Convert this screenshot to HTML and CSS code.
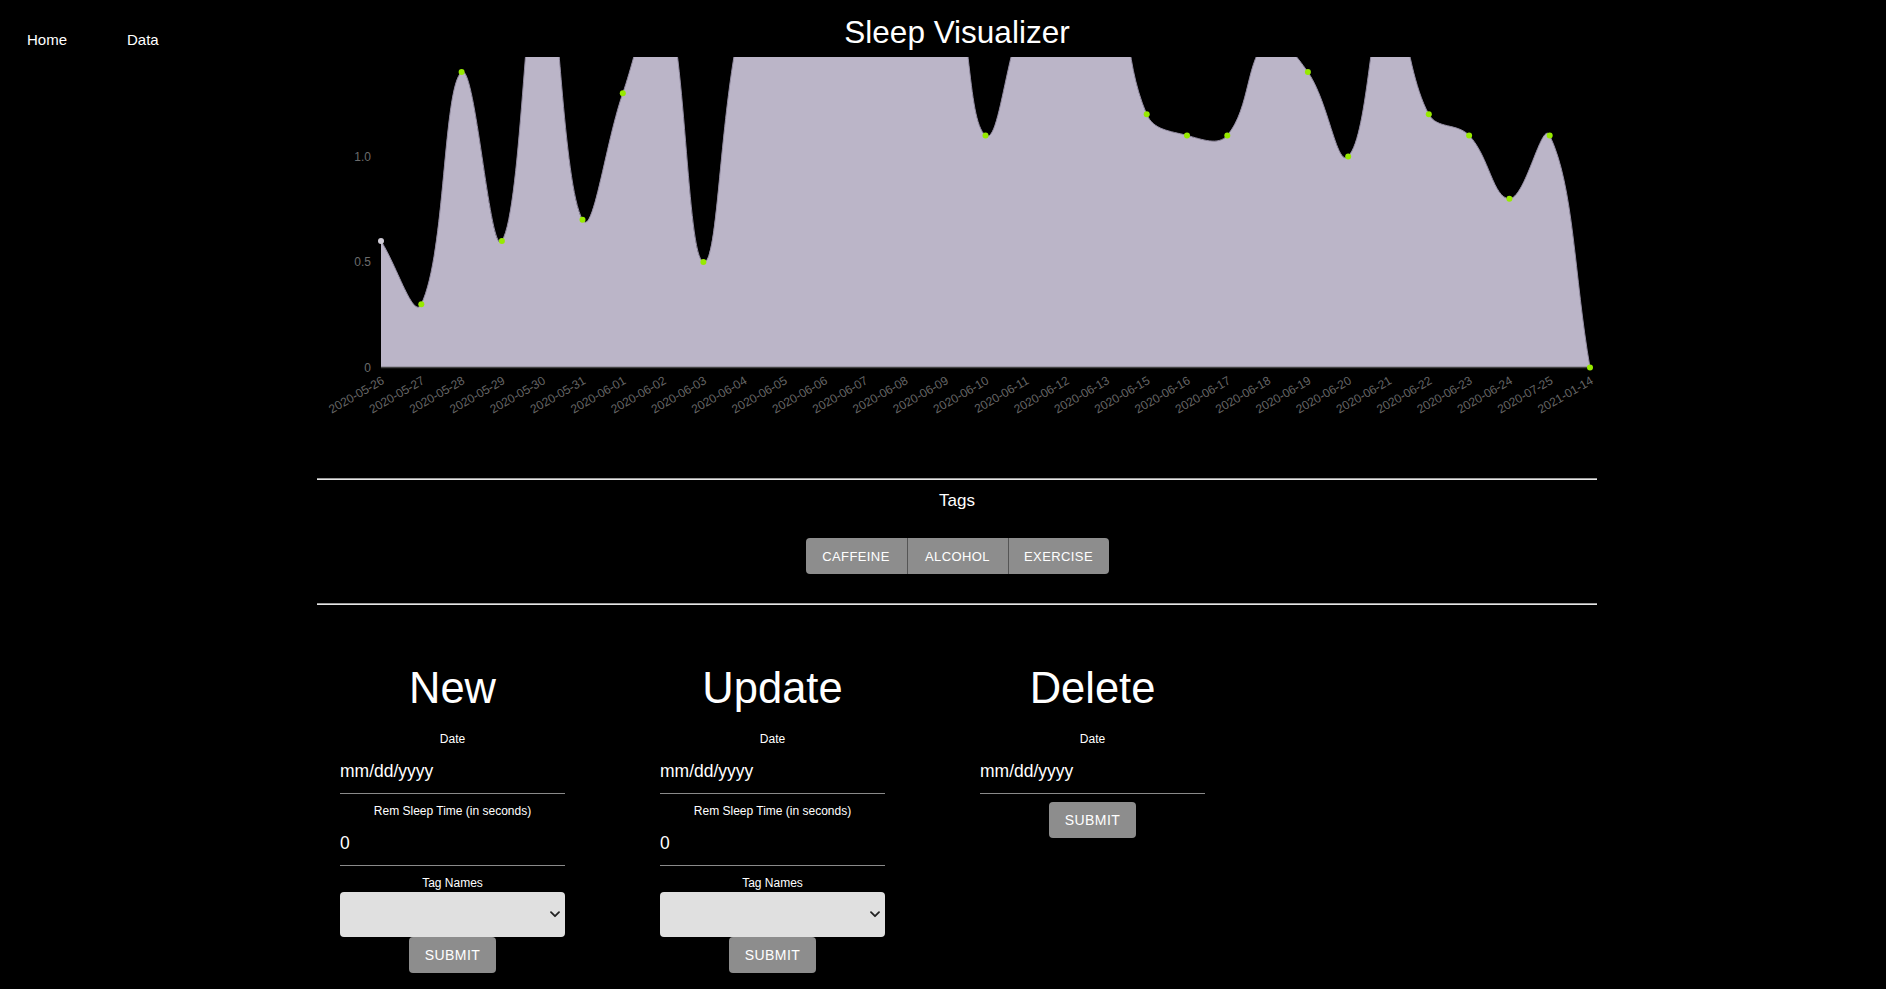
FILE: index.html
```html
<!DOCTYPE html>
<html lang="en">
<head>
<meta charset="utf-8">
<title>Sleep Visualizer</title>
<link rel="stylesheet" href="styles.css">
</head>
<body>
<div class="page">
  <nav class="nav">
    <a class="nav-link" href="#">Home</a>
    <a class="nav-link" href="#">Data</a>
  </nav>
  <main class="main">
    <h1 class="title">Sleep Visualizer</h1>
    <svg class="chart" width="1280" height="426" viewBox="0 0 1280 426">
      <defs>
        <clipPath id="plotClip"><rect x="0" y="5" width="1280" height="421"></rect></clipPath>
      </defs>
      <g clip-path="url(#plotClip)">
        <path id="areaFill" class="area-fill" d=""></path>
        <path id="areaLine" class="area-line" d=""></path>
      </g>
      <line class="axis-line" x1="64" y1="315.5" x2="1273" y2="315.5"></line>
      <g class="yticks">
        <text class="ytick" x="54" y="319.5">0</text>
        <text class="ytick" x="54" y="214">0.5</text>
        <text class="ytick" x="54" y="108.5">1.0</text>
      </g>
      <g class="dots">
        <circle class="dot dot-first" cx="64" cy="188.9" r="3"></circle>
        <circle class="dot" cx="104.3" cy="252.2" r="3"></circle>
        <circle class="dot" cx="144.6" cy="20.1" r="3"></circle>
        <circle class="dot" cx="184.9" cy="188.9" r="3"></circle>
        <circle class="dot" cx="265.5" cy="167.8" r="3"></circle>
        <circle class="dot" cx="305.8" cy="41.2" r="3"></circle>
        <circle class="dot" cx="386.4" cy="210" r="3"></circle>
        <circle class="dot" cx="668.5" cy="83.4" r="3"></circle>
        <circle class="dot" cx="829.7" cy="62.3" r="3"></circle>
        <circle class="dot" cx="870" cy="83.4" r="3"></circle>
        <circle class="dot" cx="910.3" cy="83.4" r="3"></circle>
        <circle class="dot" cx="990.9" cy="20.1" r="3"></circle>
        <circle class="dot" cx="1031.2" cy="104.5" r="3"></circle>
        <circle class="dot" cx="1111.8" cy="62.3" r="3"></circle>
        <circle class="dot" cx="1152.1" cy="83.4" r="3"></circle>
        <circle class="dot" cx="1192.4" cy="146.7" r="3"></circle>
        <circle class="dot" cx="1232.7" cy="83.4" r="3"></circle>
        <circle class="dot" cx="1273" cy="315.5" r="3"></circle>
      </g>
      <g class="xticks">
        <text class="xtick" x="68" y="331" transform="rotate(-30 68 331)">2020-05-26</text>
        <text class="xtick" x="108.3" y="331" transform="rotate(-30 108.3 331)">2020-05-27</text>
        <text class="xtick" x="148.6" y="331" transform="rotate(-30 148.6 331)">2020-05-28</text>
        <text class="xtick" x="188.9" y="331" transform="rotate(-30 188.9 331)">2020-05-29</text>
        <text class="xtick" x="229.2" y="331" transform="rotate(-30 229.2 331)">2020-05-30</text>
        <text class="xtick" x="269.5" y="331" transform="rotate(-30 269.5 331)">2020-05-31</text>
        <text class="xtick" x="309.8" y="331" transform="rotate(-30 309.8 331)">2020-06-01</text>
        <text class="xtick" x="350.1" y="331" transform="rotate(-30 350.1 331)">2020-06-02</text>
        <text class="xtick" x="390.4" y="331" transform="rotate(-30 390.4 331)">2020-06-03</text>
        <text class="xtick" x="430.7" y="331" transform="rotate(-30 430.7 331)">2020-06-04</text>
        <text class="xtick" x="471" y="331" transform="rotate(-30 471 331)">2020-06-05</text>
        <text class="xtick" x="511.3" y="331" transform="rotate(-30 511.3 331)">2020-06-06</text>
        <text class="xtick" x="551.6" y="331" transform="rotate(-30 551.6 331)">2020-06-07</text>
        <text class="xtick" x="591.9" y="331" transform="rotate(-30 591.9 331)">2020-06-08</text>
        <text class="xtick" x="632.2" y="331" transform="rotate(-30 632.2 331)">2020-06-09</text>
        <text class="xtick" x="672.5" y="331" transform="rotate(-30 672.5 331)">2020-06-10</text>
        <text class="xtick" x="712.8" y="331" transform="rotate(-30 712.8 331)">2020-06-11</text>
        <text class="xtick" x="753.1" y="331" transform="rotate(-30 753.1 331)">2020-06-12</text>
        <text class="xtick" x="793.4" y="331" transform="rotate(-30 793.4 331)">2020-06-13</text>
        <text class="xtick" x="833.7" y="331" transform="rotate(-30 833.7 331)">2020-06-15</text>
        <text class="xtick" x="874" y="331" transform="rotate(-30 874 331)">2020-06-16</text>
        <text class="xtick" x="914.3" y="331" transform="rotate(-30 914.3 331)">2020-06-17</text>
        <text class="xtick" x="954.6" y="331" transform="rotate(-30 954.6 331)">2020-06-18</text>
        <text class="xtick" x="994.9" y="331" transform="rotate(-30 994.9 331)">2020-06-19</text>
        <text class="xtick" x="1035.2" y="331" transform="rotate(-30 1035.2 331)">2020-06-20</text>
        <text class="xtick" x="1075.5" y="331" transform="rotate(-30 1075.5 331)">2020-06-21</text>
        <text class="xtick" x="1115.8" y="331" transform="rotate(-30 1115.8 331)">2020-06-22</text>
        <text class="xtick" x="1156.1" y="331" transform="rotate(-30 1156.1 331)">2020-06-23</text>
        <text class="xtick" x="1196.4" y="331" transform="rotate(-30 1196.4 331)">2020-06-24</text>
        <text class="xtick" x="1236.7" y="331" transform="rotate(-30 1236.7 331)">2020-07-25</text>
        <text class="xtick" x="1277" y="331" transform="rotate(-30 1277 331)">2021-01-14</text>
      </g>
    </svg>

    <div class="divider"></div>
    <p class="tags-title">Tags</p>
    <div class="tag-group">
      <button class="tag-btn" type="button">Caffeine</button>
      <button class="tag-btn" type="button">Alcohol</button>
      <button class="tag-btn" type="button">Exercise</button>
    </div>
    <div class="divider divider-bottom"></div>

    <section class="forms">
      <form class="crud">
        <h2 class="crud-title">New</h2>
        <label class="field-label">Date</label>
        <input class="field-input" type="text" placeholder="mm/dd/yyyy">
        <label class="field-label">Rem Sleep Time (in seconds)</label>
        <input class="field-input" type="text" value="0">
        <label class="field-label">Tag Names</label>
        <div class="select-wrap">
          <select class="tag-select"></select>
          <svg class="chevron" width="10" height="7" viewBox="0 0 10 7"><path d="M1 1.2 L5 5.2 L9 1.2" fill="none" stroke="#222" stroke-width="1.8" stroke-linecap="round" stroke-linejoin="round"></path></svg>
        </div>
        <button class="submit" type="button">Submit</button>
      </form>
      <form class="crud">
        <h2 class="crud-title">Update</h2>
        <label class="field-label">Date</label>
        <input class="field-input" type="text" placeholder="mm/dd/yyyy">
        <label class="field-label">Rem Sleep Time (in seconds)</label>
        <input class="field-input" type="text" value="0">
        <label class="field-label">Tag Names</label>
        <div class="select-wrap">
          <select class="tag-select"></select>
          <svg class="chevron" width="10" height="7" viewBox="0 0 10 7"><path d="M1 1.2 L5 5.2 L9 1.2" fill="none" stroke="#222" stroke-width="1.8" stroke-linecap="round" stroke-linejoin="round"></path></svg>
        </div>
        <button class="submit" type="button">Submit</button>
      </form>
      <form class="crud">
        <h2 class="crud-title">Delete</h2>
        <label class="field-label">Date</label>
        <input class="field-input" type="text" placeholder="mm/dd/yyyy">
        <button class="submit" type="button">Submit</button>
      </form>
    </section>
  </main>
</div>
<script src="script.js"></script>
</body>
</html>
```

FILE: styles.css
```css
* { box-sizing: border-box; }

html, body {
  margin: 0;
  padding: 0;
  background: #000;
  color: #fff;
  font-family: "Liberation Sans", Arial, Helvetica, sans-serif;
}

.page {
  display: grid;
  grid-template-columns: 317px 1280px 1fr;
  align-items: start;
}

.nav {
  display: flex;
  gap: 60px;
  padding: 30px 0 0 27px;
  font-size: 15px;
  line-height: 20px;
}

.nav-link {
  color: #fff;
  text-decoration: none;
}

.main {
  display: flex;
  flex-direction: column;
}

.title {
  margin: 0;
  padding-top: 13px;
  height: 52px;
  font-size: 31.5px;
  line-height: 39px;
  font-weight: normal;
  text-align: center;
}

.chart {
  display: block;
  overflow: visible;
}

.area-fill {
  fill: #bbb5c8;
  stroke: none;
}

.area-line {
  fill: none;
  stroke: #958ea4;
  stroke-width: 1;
}

.axis-line {
  stroke: #444;
  stroke-width: 1.5;
}

.ytick {
  font-family: "Liberation Sans", Arial, sans-serif;
  font-size: 12px;
  fill: #6c6c6c;
  text-anchor: end;
}

.xtick {
  font-family: "Liberation Sans", Arial, sans-serif;
  font-size: 12px;
  fill: #666;
  text-anchor: end;
}

.dot {
  fill: #97ea00;
}

.dot-first {
  fill: #cfcbd6;
}

.divider {
  height: 2px;
  border-top: 1px solid #9a9a9a;
  border-bottom: 1px solid #e6e6e6;
}

.divider-bottom {
  margin-top: 29px;
}

.tags-title {
  margin: 11px 0 0;
  font-size: 17px;
  line-height: 20px;
  text-align: center;
}

.tag-group {
  display: flex;
  justify-content: center;
  margin-top: 27px;
}

.tag-btn {
  width: 101px;
  height: 36px;
  padding: 0;
  border: none;
  background: #8d8d8d;
  color: #fff;
  font-family: "Liberation Sans", Arial, sans-serif;
  font-size: 13px;
  letter-spacing: 0.4px;
  text-transform: uppercase;
}

.tag-btn + .tag-btn {
  border-left: 1px solid #555;
}

.tag-btn:first-child {
  border-radius: 4px 0 0 4px;
}

.tag-btn:last-child {
  border-radius: 0 4px 4px 0;
}

.forms {
  display: flex;
  align-items: flex-start;
  gap: 95px;
  padding-left: 23px;
  margin-top: 59px;
}

.crud {
  width: 225px;
  display: flex;
  flex-direction: column;
  margin: 0;
}

.crud-title {
  margin: 0 0 10px;
  font-size: 43.5px;
  line-height: 48px;
  font-weight: normal;
  text-align: center;
}

.field-label {
  display: block;
  margin-top: 10px;
  font-size: 12px;
  line-height: 14px;
  text-align: center;
}

.field-input {
  display: block;
  width: 225px;
  height: 48px;
  padding: 13px 0 10px;
  border: none;
  border-bottom: 1px solid #8a8a8a;
  background: transparent;
  color: #fff;
  font-family: "Liberation Sans", Arial, sans-serif;
  font-size: 17.5px;
  line-height: 24px;
  outline: none;
}

.field-input::placeholder {
  color: #fff;
  opacity: 1;
}

.select-wrap {
  position: relative;
  margin-top: 2px;
  width: 225px;
  height: 45px;
}

.tag-select {
  appearance: none;
  -webkit-appearance: none;
  display: block;
  width: 225px;
  height: 45px;
  border: none;
  border-radius: 4px;
  background: #e0e0e0;
  outline: none;
}

.chevron {
  position: absolute;
  right: 5px;
  top: 19px;
}

.submit {
  display: block;
  width: 87px;
  height: 36px;
  margin: 0 auto;
  padding: 0;
  border: none;
  border-radius: 4px;
  background: #8d8d8d;
  color: #fff;
  font-family: "Liberation Sans", Arial, sans-serif;
  font-size: 14px;
  letter-spacing: 0.4px;
  text-transform: uppercase;
}

.field-input + .submit {
  margin-top: 8px;
}
```

FILE: script.js
```js
(function () {
  var vals = [0.6, 0.3, 1.4, 0.6, 2.0, 0.7, 1.3, 1.8, 0.5, 1.7, 2, 2, 2, 2, 2, 1.1, 1.7, 2, 2,
              1.2, 1.1, 1.1, 1.55, 1.4, 1.0, 1.8, 1.2, 1.1, 0.8, 1.1, 0];
  var X0 = 64, DX = 40.3, BASE = 315.5, K = 211, TOP = 5, TENSION = 0.4;
  var pts = vals.map(function (v, i) { return { x: X0 + DX * i, y: BASE - K * v }; });

  function dist(a, b) { return Math.sqrt((a.x - b.x) * (a.x - b.x) + (a.y - b.y) * (a.y - b.y)); }
  function inArea(p) { return p.y >= TOP - 0.5 && p.y <= BASE + 0.5; }
  function cap(v, lo, hi) { return Math.max(Math.min(v, hi), lo); }

  var n = pts.length;
  for (var i = 0; i < n; i++) {
    var cur = pts[i];
    var prev = i === 0 ? cur : pts[i - 1];
    var next = i === n - 1 ? cur : pts[i + 1];
    var d01 = dist(cur, prev), d12 = dist(next, cur);
    var s01 = d01 / (d01 + d12), s12 = d12 / (d01 + d12);
    if (isNaN(s01)) s01 = 0;
    if (isNaN(s12)) s12 = 0;
    var fa = TENSION * s01, fb = TENSION * s12;
    cur.c1x = cur.x - fa * (next.x - prev.x);
    cur.c1y = cur.y - fa * (next.y - prev.y);
    cur.c2x = cur.x + fb * (next.x - prev.x);
    cur.c2y = cur.y + fb * (next.y - prev.y);
  }
  for (var j = 0; j < n; j++) {
    var p = pts[j];
    if (!inArea(p)) continue;
    if (j > 0 && inArea(pts[j - 1])) p.c1y = cap(p.c1y, TOP, BASE);
    if (j < n - 1 && inArea(pts[j + 1])) p.c2y = cap(p.c2y, TOP, BASE);
  }

  var d = 'M' + pts[0].x.toFixed(2) + ',' + pts[0].y.toFixed(2);
  for (var k = 0; k < n - 1; k++) {
    var a = pts[k], b = pts[k + 1];
    d += 'C' + a.c2x.toFixed(2) + ',' + a.c2y.toFixed(2) + ',' +
         b.c1x.toFixed(2) + ',' + b.c1y.toFixed(2) + ',' +
         b.x.toFixed(2) + ',' + b.y.toFixed(2);
  }
  var last = pts[n - 1];
  document.getElementById('areaLine').setAttribute('d', d);
  document.getElementById('areaFill').setAttribute('d',
    d + 'L' + last.x.toFixed(2) + ',' + BASE + 'L' + pts[0].x.toFixed(2) + ',' + BASE + 'Z');
})();
```
